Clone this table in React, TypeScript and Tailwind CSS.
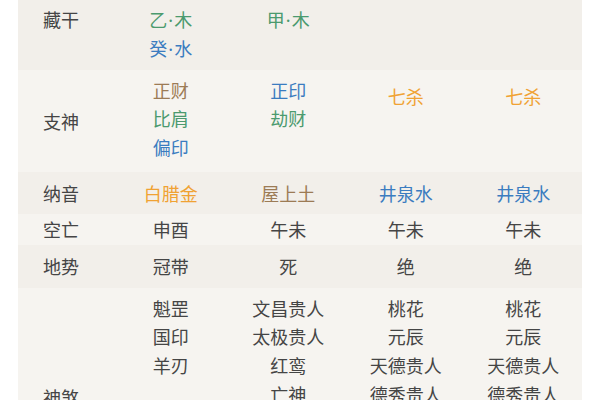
import React from "react";

type Line = { t: string; c?: string };

const G = "text-[#4b9a6e]";
const B = "text-[#3b7cc0]";
const BR = "text-[#9c7b55]";
const O = "text-[#f0a233]";

type Row = {
  label: string;
  h: string;
  bg: string;
  labelTop?: boolean;
  cells: { lines: Line[]; pt?: string; center?: boolean }[];
};

const DARK = "bg-[#f2efea]";
const LIGHT = "bg-[#f6f4f0]";

const rows: Row[] = [
  {
    label: "藏干",
    h: "h-[70px]",
    bg: DARK,
    labelTop: true,
    cells: [
      { lines: [{ t: "乙·木", c: G }, { t: "癸·水", c: B }], pt: "pt-[4.5px]" },
      { lines: [{ t: "甲·木", c: G }], pt: "pt-[4.5px]" },
      { lines: [] },
      { lines: [] },
    ],
  },
  {
    label: "支神",
    h: "h-[102px]",
    bg: LIGHT,
    cells: [
      { lines: [{ t: "正财", c: BR }, { t: "比肩", c: G }, { t: "偏印", c: B }], pt: "pt-[5.5px]" },
      { lines: [{ t: "正印", c: B }, { t: "劫财", c: G }], pt: "pt-[5.5px]" },
      { lines: [{ t: "七杀", c: O }], pt: "pt-[12px]" },
      { lines: [{ t: "七杀", c: O }], pt: "pt-[12px]" },
    ],
  },
  {
    label: "纳音",
    h: "h-[42px]",
    bg: DARK,
    cells: [
      { lines: [{ t: "白腊金", c: O }], center: true },
      { lines: [{ t: "屋上土", c: BR }], center: true },
      { lines: [{ t: "井泉水", c: B }], center: true },
      { lines: [{ t: "井泉水", c: B }], center: true },
    ],
  },
  {
    label: "空亡",
    h: "h-[31px]",
    bg: LIGHT,
    cells: [
      { lines: [{ t: "申酉" }], center: true },
      { lines: [{ t: "午未" }], center: true },
      { lines: [{ t: "午未" }], center: true },
      { lines: [{ t: "午未" }], center: true },
    ],
  },
  {
    label: "地势",
    h: "h-[43px]",
    bg: DARK,
    cells: [
      { lines: [{ t: "冠带" }], center: true },
      { lines: [{ t: "死" }], center: true },
      { lines: [{ t: "绝" }], center: true },
      { lines: [{ t: "绝" }], center: true },
    ],
  },
  {
    label: "神煞",
    h: "h-[218px]",
    bg: LIGHT,
    cells: [
      { lines: [{ t: "魁罡" }, { t: "国印" }, { t: "羊刃" }], pt: "pt-[5.5px]" },
      { lines: [{ t: "文昌贵人" }, { t: "太极贵人" }, { t: "红鸾" }, { t: "亡神" }], pt: "pt-[5.5px]" },
      { lines: [{ t: "桃花" }, { t: "元辰" }, { t: "天德贵人" }, { t: "德秀贵人" }, { t: "国印" }], pt: "pt-[5.5px]" },
      { lines: [{ t: "桃花" }, { t: "元辰" }, { t: "天德贵人" }, { t: "德秀贵人" }, { t: "国印" }], pt: "pt-[5.5px]" },
    ],
  },
];

function Text({ t }: { t: string }) {
  if (!t.includes("·")) return <>{t}</>;
  const [a, b] = t.split("·");
  return (
    <>
      {a}
      <span className="mx-[1px]" style={{ fontFamily: '"Noto Sans", sans-serif' }}>
        ·
      </span>
      {b}
    </>
  );
}

export default function App() {
  return (
    <div
      className="w-[600px] h-[400px] overflow-hidden bg-white px-[18px] text-[18px] text-[#454545]"
      style={{ fontFamily: '"Noto Sans CJK SC", "Noto Sans", sans-serif' }}
    >
      <div className="flex flex-col">
        {rows.map((r, i) => (
          <div
            key={i}
            className={`grid grid-cols-[94px_1fr_1fr_1fr_1fr] ${r.h} ${r.bg} shrink-0`}
          >
            <div
              className={`pl-[25px] flex leading-[29px] ${
                r.labelTop ? "items-start pt-[4.5px]" : "items-center"
              }`}
            >
              {r.label}
            </div>
            {r.cells.map((c, j) => (
              <div
                key={j}
                className={`flex flex-col items-center leading-[28.7px] ${
                  c.center ? "justify-center" : "justify-start"
                } ${c.pt ?? ""}`}
              >
                {c.lines.map((l, k) => (
                  <div key={k} className={`whitespace-nowrap ${l.c ?? ""}`}>
                    <Text t={l.t} />
                  </div>
                ))}
              </div>
            ))}
          </div>
        ))}
      </div>
    </div>
  );
}
